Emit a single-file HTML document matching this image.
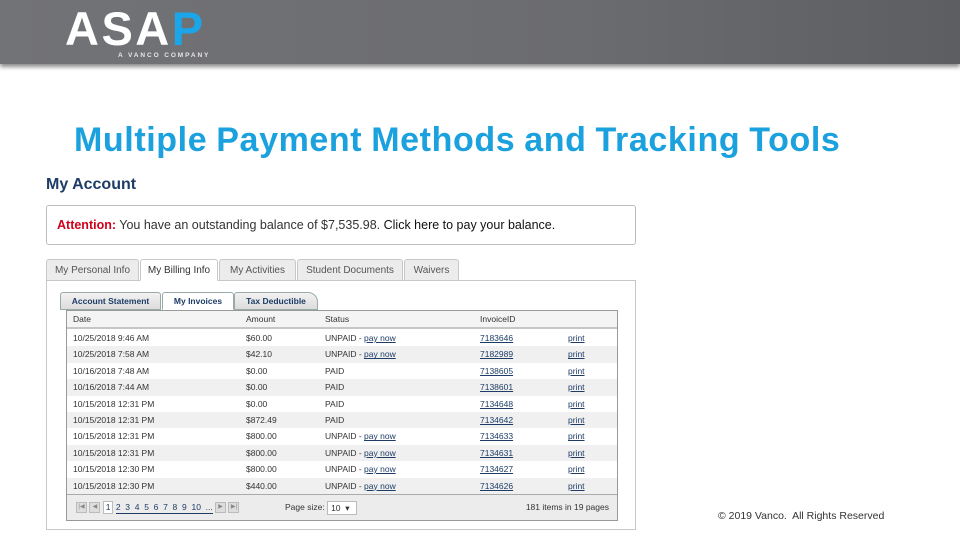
<!DOCTYPE html>
<html><head><style>
*{margin:0;padding:0;box-sizing:border-box}
body{width:960px;height:540px;background:#fff;position:relative;overflow:hidden;font-family:"Liberation Sans",Arial,sans-serif}
.hdr{position:absolute;left:0;top:0;width:960px;height:64px;background:linear-gradient(90deg,#727377,#6b6c70 60%,#5d5e62);box-shadow:0 3px 4px rgba(0,0,0,.45)}
.logo{position:absolute;left:65px;top:7px;color:#fff;font-weight:bold;font-size:47px;letter-spacing:2.5px;line-height:44px}
.logo span{color:#1aa6e8}
.sub{position:absolute;left:118px;top:52px;color:#e6e6e6;font-size:6.5px;letter-spacing:1.9px;font-weight:bold}
h1{position:absolute;left:74px;top:121px;font-size:34px;color:#1ba1dd;font-weight:bold;letter-spacing:0.6px;word-spacing:-1px;white-space:nowrap}
.ma{position:absolute;left:46px;top:176px;font-size:16px;font-weight:bold;color:#1d3c66}
.att{position:absolute;left:46px;top:205px;width:590px;height:40px;border:1px solid #bdbdbd;border-radius:3px;font-size:12.5px;color:#333;padding:12px 10px}
.att b{color:#d0021b}
.tabs{position:absolute;left:46px;top:259px;height:22px;font-size:10px;color:#555}
.tab{position:absolute;top:0;height:22px;border:1px solid #c8c8c8;background:#ececec;line-height:21px;text-align:center;border-radius:3px 3px 0 0}
.tab.on{background:#fff;border-bottom-color:#fff;color:#333;z-index:2}
.panel{position:absolute;left:46px;top:280px;width:590px;height:250px;border:1px solid #c8c8c8}
.st{position:absolute;top:292px;height:18px;font-size:8.5px;font-weight:bold;color:#1d3c66;line-height:17px;text-align:center;border:1px solid #9aa;border-radius:3px 3px 0 0;background:linear-gradient(#f2f2f2,#dcdcdc)}
.st.on{background:#fff;border-bottom-color:#fff;z-index:2}
.grid{position:absolute;left:66px;top:310px;width:552px;height:211px;border:1px solid #999;font-size:8.5px;color:#333}
.row{position:absolute;left:0;width:550px;height:16.4px;line-height:16px}
.row span{position:absolute}
.alt{background:#f0f0f0}
.h{background:#f4f4f4;border-bottom:2px solid #c6c6c6;height:18px}
a{color:#1d3c66;text-decoration:underline}
.pg{position:absolute;left:0;top:183px;width:550px;height:26px;border-top:1px solid #aaa;background:#ececec;line-height:25px}
.btn{display:inline-block;width:11px;height:11px;background:#ddd;border:1px solid #bbb;vertical-align:middle;font-size:6px;line-height:9px;text-align:center;color:#888}
.copy{position:absolute;left:718px;top:510px;font-size:10.5px;color:#333}
</style></head><body>
<div class="hdr"><div class="logo">ASA<span>P</span></div><div class="sub">A VANCO COMPANY</div></div>
<h1>Multiple Payment Methods and Tracking Tools</h1>
<div class="ma">My Account</div>
<div class="att"><b>Attention:</b> You have an outstanding balance of $7,535.98. <span style="color:#111">Click here to pay your balance.</span></div>
<div class="tabs">
<div class="tab" style="left:0;width:93px">My Personal Info</div>
<div class="tab on" style="left:94px;width:78px">My Billing Info</div>
<div class="tab" style="left:173px;width:77px">My Activities</div>
<div class="tab" style="left:251px;width:106px">Student Documents</div>
<div class="tab" style="left:358px;width:55px">Waivers</div>
</div>
<div class="panel"></div>
<div class="st" style="left:60px;width:101px">Account Statement</div>
<div class="st on" style="left:162px;width:72px">My Invoices</div>
<div class="st" style="left:234px;width:84px;border-radius:3px 10px 0 0">Tax Deductible</div>
<div class="grid">
<div class="row h" style="top:0"><span style="left:6px">Date</span><span style="left:179px">Amount</span><span style="left:258px">Status</span><span style="left:413px">InvoiceID</span></div>
<div class="row" style="top:19px"><span style="left:6px">10/25/2018 9:46 AM</span><span style="left:179px">$60.00</span><span style="left:258px">UNPAID - <a>pay now</a></span><span style="left:413px"><a>7183646</a></span><span style="left:501px"><a>print</a></span></div>
<div class="row alt" style="top:35.4px"><span style="left:6px">10/25/2018 7:58 AM</span><span style="left:179px">$42.10</span><span style="left:258px">UNPAID - <a>pay now</a></span><span style="left:413px"><a>7182989</a></span><span style="left:501px"><a>print</a></span></div>
<div class="row" style="top:51.8px"><span style="left:6px">10/16/2018 7:48 AM</span><span style="left:179px">$0.00</span><span style="left:258px">PAID</span><span style="left:413px"><a>7138605</a></span><span style="left:501px"><a>print</a></span></div>
<div class="row alt" style="top:68.2px"><span style="left:6px">10/16/2018 7:44 AM</span><span style="left:179px">$0.00</span><span style="left:258px">PAID</span><span style="left:413px"><a>7138601</a></span><span style="left:501px"><a>print</a></span></div>
<div class="row" style="top:84.6px"><span style="left:6px">10/15/2018 12:31 PM</span><span style="left:179px">$0.00</span><span style="left:258px">PAID</span><span style="left:413px"><a>7134648</a></span><span style="left:501px"><a>print</a></span></div>
<div class="row alt" style="top:101px"><span style="left:6px">10/15/2018 12:31 PM</span><span style="left:179px">$872.49</span><span style="left:258px">PAID</span><span style="left:413px"><a>7134642</a></span><span style="left:501px"><a>print</a></span></div>
<div class="row" style="top:117.4px"><span style="left:6px">10/15/2018 12:31 PM</span><span style="left:179px">$800.00</span><span style="left:258px">UNPAID - <a>pay now</a></span><span style="left:413px"><a>7134633</a></span><span style="left:501px"><a>print</a></span></div>
<div class="row alt" style="top:133.8px"><span style="left:6px">10/15/2018 12:31 PM</span><span style="left:179px">$800.00</span><span style="left:258px">UNPAID - <a>pay now</a></span><span style="left:413px"><a>7134631</a></span><span style="left:501px"><a>print</a></span></div>
<div class="row" style="top:150.2px"><span style="left:6px">10/15/2018 12:30 PM</span><span style="left:179px">$800.00</span><span style="left:258px">UNPAID - <a>pay now</a></span><span style="left:413px"><a>7134627</a></span><span style="left:501px"><a>print</a></span></div>
<div class="row alt" style="top:166.6px"><span style="left:6px">10/15/2018 12:30 PM</span><span style="left:179px">$440.00</span><span style="left:258px">UNPAID - <a>pay now</a></span><span style="left:413px"><a>7134626</a></span><span style="left:501px"><a>print</a></span></div>
<div class="pg">
<span style="position:absolute;left:9px;top:0"><span class="btn">|◀</span> <span class="btn">◀</span> <span style="display:inline-block;background:#fff;border:1px solid #bbb;padding:0 2px;line-height:11px;color:#1d3c66">1</span> <span style="color:#1d3c66;border-bottom:1px solid #1d3c66;line-height:11px;display:inline-block">2&nbsp; 3&nbsp; 4&nbsp; 5&nbsp; 6&nbsp; 7&nbsp; 8&nbsp; 9&nbsp; 10&nbsp; ... </span> <span class="btn">▶</span> <span class="btn">▶|</span></span>
<span style="position:absolute;left:218px">Page size: <span style="display:inline-block;background:#fff;border:1px solid #bbb;width:30px;line-height:12px;padding-left:3px;vertical-align:middle">10 &nbsp;▾</span></span>
<span style="position:absolute;right:8px">181 items in 19 pages</span>
</div>
</div>
<div class="copy">© 2019 Vanco.&nbsp; All Rights Reserved</div>
</body></html>
